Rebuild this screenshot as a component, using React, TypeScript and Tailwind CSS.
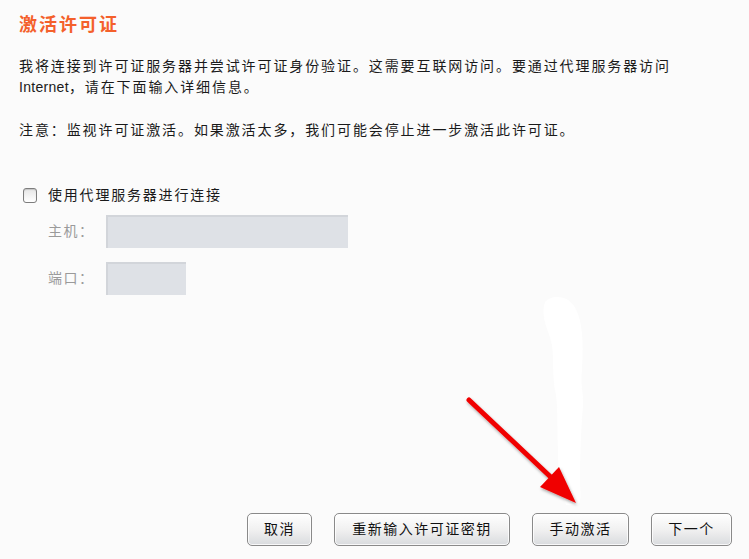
import React from "react";

const font = { fontFamily: '"Liberation Sans", "Noto Sans CJK SC", sans-serif' };

function Btn({ label, w }: { label: string; w: string }) {
  return (
    <button
      className={`${w} h-[33px] rounded-[5px] border border-[#8a8a8a] bg-gradient-to-b from-[#ffffff] via-[#f1f1f1] to-[#d9dbde] text-[14px] tracking-[1.5px] text-[#111] shadow-[inset_0_0_0_1px_rgba(255,255,255,0.8)] flex items-center justify-center`}
    >
      {label}
    </button>
  );
}

export default function App() {
  return (
    <div
      className="relative w-[749px] h-[559px] bg-[#fbfbfb] flex flex-col overflow-hidden"
      style={font}
    >
      <div className="pl-[19px] pt-[14px] pr-4">
        <h1 className="text-[18px] leading-[22px] font-bold tracking-[2px] text-[#f4602b]">
          激活许可证
        </h1>
        <p className="mt-[20px] text-[14px] leading-[21px] tracking-[1.9px] text-[#1a1a1a]">
          我将连接到许可证服务器并尝试许可证身份验证。这需要互联网访问。要通过代理服务器访问
          <br />
          <span className="tracking-[0.3px]">Internet</span>，请在下面输入详细信息。
        </p>
        <p className="mt-[22px] text-[14px] leading-[21px] tracking-[1.9px] text-[#1a1a1a]">
          注意：监视许可证激活。如果激活太多，我们可能会停止进一步激活此许可证。
        </p>

        <label className="mt-[44px] ml-[4px] flex items-center gap-[11px] text-[14px] tracking-[1.8px] text-[#1a1a1a]">
          <span className="w-[14px] h-[15px] rounded-[3px] border border-[#7d7d7d] bg-gradient-to-b from-[#e6e6e6] to-[#ffffff] shadow-[inset_0_1px_1px_rgba(0,0,0,0.15)]" />
          使用代理服务器进行连接
        </label>

        <div className="mt-[9px] ml-[29px] flex flex-col gap-[14px]">
          <div className="flex items-center">
            <span className="w-[58px] text-[14px] tracking-[1.5px] text-[#9a9a9a]">主机：</span>
            <div className="w-[242px] h-[33px] bg-[#dee1e6] border-t-2 border-l-2 border-[#d2d5da]" />
          </div>
          <div className="flex items-center">
            <span className="w-[58px] text-[14px] tracking-[1.5px] text-[#9a9a9a]">端口：</span>
            <div className="w-[80px] h-[33px] bg-[#dee1e6] border-t-2 border-l-2 border-[#d2d5da]" />
          </div>
        </div>
      </div>

      <div className="mt-auto mb-[13px] mr-[17px] flex justify-end gap-[22px]">
        <Btn label="取消" w="w-[65px]" />
        <Btn label="重新输入许可证密钥" w="w-[176px]" />
        <Btn label="手动激活" w="w-[97px]" />
        <Btn label="下一个" w="w-[81px]" />
      </div>

      {/* white smudge */}
      <svg className="absolute left-0 top-0 pointer-events-none" width="749" height="559">
        <path
          d="M545 302 C552 294 568 296 574 306 C582 318 584 340 582 370 C580 385 584 395 583 405 C581 430 580 455 580 480 C580 492 582 500 578 505 L566 505 C560 490 558 470 558 450 C557 430 558 410 556 395 C552 380 554 360 552 345 C549 330 540 318 545 302 Z"
          fill="#ffffff"
        />
      </svg>

      {/* red arrow */}
      <svg className="absolute left-0 top-0 pointer-events-none" width="749" height="559">
        <defs>
          <filter id="sh" x="-20%" y="-20%" width="140%" height="140%">
            <feDropShadow dx="1" dy="2" stdDeviation="1.5" floodColor="#000" floodOpacity="0.35" />
          </filter>
        </defs>
        <g filter="url(#sh)">
          <line x1="469" y1="400" x2="556" y2="482" stroke="#f00000" strokeWidth="5" strokeLinecap="round" />
          <polygon points="576,503 540,487 559,467" fill="#f00000" />
        </g>
      </svg>
    </div>
  );
}
